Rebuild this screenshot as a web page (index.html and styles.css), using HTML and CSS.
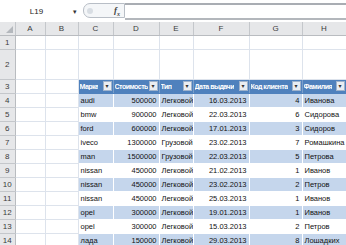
FILE: index.html
```html
<!DOCTYPE html>
<html lang="ru">
<head>
<meta charset="UTF-8">
<title>Лист Excel</title>
<link rel="stylesheet" href="styles.css">
</head>
<body>
    <div class="formula-bar">
        <div class="name-box">
            <span class="cell-ref">L19</span>
            <span class="name-drop">&#9662;</span>
        </div>
        <div class="fx-box">
            <span class="fx-dot"></span>
            <span class="fx">f<sub>x</sub></span>
        </div>
        <div class="formula-input"></div>
    </div>

    <table class="sheet">
        <colgroup>
            <col class="c-corner">
            <col class="c-a">
            <col class="c-b">
            <col class="c-c">
            <col class="c-d">
            <col class="c-e">
            <col class="c-f">
            <col class="c-g">
            <col class="c-h">
        </colgroup>
        <tr class="col-head">
            <th class="corner"><span class="corner-tri"></span></th>
            <th>A</th><th>B</th><th>C</th><th>D</th><th>E</th><th>F</th><th>G</th><th>H</th>
        </tr>
        <tr>
            <th class="row-head">1</th>
            <td></td><td></td><td></td><td></td><td></td><td></td><td></td><td></td>
        </tr>
        <tr class="tall">
            <th class="row-head">2</th>
            <td></td><td></td><td></td><td></td><td></td><td></td><td></td><td></td>
        </tr>
        <tr>
            <th class="row-head">3</th>
            <td></td><td></td>
            <td class="t-head"><div class="hd"><span>Марка</span><i class="filter">&#9662;</i></div></td>
            <td class="t-head"><div class="hd"><span>Стоимость</span><i class="filter">&#9662;</i></div></td>
            <td class="t-head"><div class="hd"><span>Тип</span><i class="filter">&#9662;</i></div></td>
            <td class="t-head"><div class="hd"><span>Дата выдачи</span><i class="filter">&#9662;</i></div></td>
            <td class="t-head"><div class="hd"><span>Код клиента</span><i class="filter">&#9662;</i></div></td>
            <td class="t-head"><div class="hd"><span>Фамилия</span><i class="filter">&#9662;</i></div></td>
        </tr>
        <tr class="band">
            <th class="row-head">4</th><td></td><td></td>
            <td class="t">audi</td><td class="t num">500000</td><td class="t">Легковой</td><td class="t num">16.03.2013</td><td class="t num">4</td><td class="t">Иванова</td>
        </tr>
        <tr>
            <th class="row-head">5</th><td></td><td></td>
            <td class="t">bmw</td><td class="t num">900000</td><td class="t">Легковой</td><td class="t num">22.03.2013</td><td class="t num">6</td><td class="t">Сидорова</td>
        </tr>
        <tr class="band">
            <th class="row-head">6</th><td></td><td></td>
            <td class="t">ford</td><td class="t num">600000</td><td class="t">Легковой</td><td class="t num">17.01.2013</td><td class="t num">3</td><td class="t">Сидоров</td>
        </tr>
        <tr>
            <th class="row-head">7</th><td></td><td></td>
            <td class="t">iveco</td><td class="t num">1300000</td><td class="t">Грузовой</td><td class="t num">23.02.2013</td><td class="t num">7</td><td class="t">Ромашкина</td>
        </tr>
        <tr class="band">
            <th class="row-head">8</th><td></td><td></td>
            <td class="t">man</td><td class="t num">1500000</td><td class="t">Грузовой</td><td class="t num">22.03.2013</td><td class="t num">5</td><td class="t">Петрова</td>
        </tr>
        <tr>
            <th class="row-head">9</th><td></td><td></td>
            <td class="t">nissan</td><td class="t num">450000</td><td class="t">Легковой</td><td class="t num">21.02.2013</td><td class="t num">1</td><td class="t">Иванов</td>
        </tr>
        <tr class="band">
            <th class="row-head">10</th><td></td><td></td>
            <td class="t">nissan</td><td class="t num">450000</td><td class="t">Легковой</td><td class="t num">23.02.2013</td><td class="t num">2</td><td class="t">Петров</td>
        </tr>
        <tr>
            <th class="row-head">11</th><td></td><td></td>
            <td class="t">nissan</td><td class="t num">450000</td><td class="t">Легковой</td><td class="t num">25.03.2013</td><td class="t num">1</td><td class="t">Иванов</td>
        </tr>
        <tr class="band">
            <th class="row-head">12</th><td></td><td></td>
            <td class="t">opel</td><td class="t num">300000</td><td class="t">Легковой</td><td class="t num">19.01.2013</td><td class="t num">1</td><td class="t">Иванов</td>
        </tr>
        <tr>
            <th class="row-head">13</th><td></td><td></td>
            <td class="t">opel</td><td class="t num">300000</td><td class="t">Легковой</td><td class="t num">15.03.2013</td><td class="t num">2</td><td class="t">Петров</td>
        </tr>
        <tr class="band">
            <th class="row-head">14</th><td></td><td></td>
            <td class="t">лада</td><td class="t num">150000</td><td class="t">Легковой</td><td class="t num">29.03.2013</td><td class="t num">8</td><td class="t">Лошадких</td>
        </tr>
    </table>
</body>
</html>
```

FILE: styles.css
```css
body {
    margin: 0;
    padding: 0;
    background-color: #ffffff;
    font-family: 'Liberation Sans', 'DejaVu Sans', sans-serif;
    overflow: hidden;
    width: 346px;
    height: 245px;
}

/* строка формул */
.formula-bar {
    display: flex;
    align-items: stretch;
    height: 22px;
}

.name-box {
    width: 83px;
    display: flex;
    align-items: center;
    padding-top: 1px;
    box-sizing: border-box;
}

.cell-ref {
    width: 73px;
    text-align: center;
    font-size: 8px;
    color: #222;
}

.name-drop {
    font-size: 7px;
    color: #333;
}

.fx-box {
    width: 42px;
    margin: 3px 0 4px;
    border: 1px solid #b8bec6;
    border-radius: 7px 0 0 7px;
    background-color: #f4f6f8;
    display: flex;
    align-items: center;
    justify-content: space-between;
    padding: 0 4px 0 3px;
    box-sizing: border-box;
}

.fx-dot {
    width: 6px;
    height: 6px;
    border-radius: 50%;
    background-color: #d8dde3;
}

.fx {
    font-family: 'Liberation Serif', serif;
    font-style: italic;
    font-weight: bold;
    font-size: 9px;
    color: #444;
}

.fx sub {
    font-size: 6px;
}

.formula-input {
    flex: 1;
    margin: 3px 0 2px;
    border-top: 2px solid #a9adb3;
    border-bottom: 2px solid #b3b7bc;
    background-color: #ffffff;
}

/* лист */
.sheet {
    table-layout: fixed;
    border-collapse: collapse;
    width: 346px;
    font-size: 7.5px;
    color: #111;
}

.c-corner { width: 15px; }
.c-a { width: 30px; }
.c-b { width: 33px; }
.c-c { width: 35px; }
.c-d { width: 46px; }
.c-e { width: 34px; }
.c-f { width: 56px; }
.c-g { width: 53px; }
.c-h { width: 44px; }

.sheet tr {
    height: 14px;
}

.sheet tr.col-head {
    height: 13px;
}

.sheet tr.tall {
    height: 30px;
}

.sheet td {
    padding: 0 2px;
    border-right: 1px solid #dde3ec;
    border-bottom: 1px solid #dde3ec;
    white-space: nowrap;
    overflow: hidden;
}

.col-head th {
    background-color: #e6e7e9;
    border-right: 1px solid #c4c7cb;
    border-bottom: 1px solid #b9bcc0;
    font-weight: normal;
    color: #3c3c3c;
    font-size: 8px;
    padding: 0;
}

.corner {
    position: relative;
}

.corner-tri {
    position: absolute;
    right: 2px;
    bottom: 2px;
    width: 0;
    height: 0;
    border-left: 7px solid transparent;
    border-bottom: 7px solid #b4b8bd;
}

.row-head {
    background-color: #e6e7e9;
    border-right: 1px solid #b9bcc0;
    border-bottom: 1px solid #c4c7cb;
    font-weight: normal;
    color: #3c3c3c;
    font-size: 8px;
    padding: 0;
    text-align: center;
}

/* умная таблица */
.sheet td.t-head {
    background-color: #4f81bd;
    border-right: 1px solid #7b9fcb;
    border-bottom: 1px solid #4f81bd;
    color: #ffffff;
    font-weight: bold;
    font-size: 7px;
    padding: 0 1px 0 1px;
}

.hd {
    display: flex;
    align-items: center;
    justify-content: space-between;
    gap: 1px;
}

.hd span {
    overflow: hidden;
    letter-spacing: -0.5px;
}

.filter {
    flex: none;
    width: 7px;
    height: 8px;
    background-color: #e9edf2;
    border: 1px solid #9fb3cc;
    color: #333;
    font-style: normal;
    font-size: 6px;
    line-height: 8px;
    text-align: center;
}

.sheet td.t {
    border-right-color: transparent;
    border-bottom: 1px solid #ffffff;
}

.sheet .band td.t {
    background-color: #c5d6ec;
}

.sheet td.num {
    text-align: right;
}
```
